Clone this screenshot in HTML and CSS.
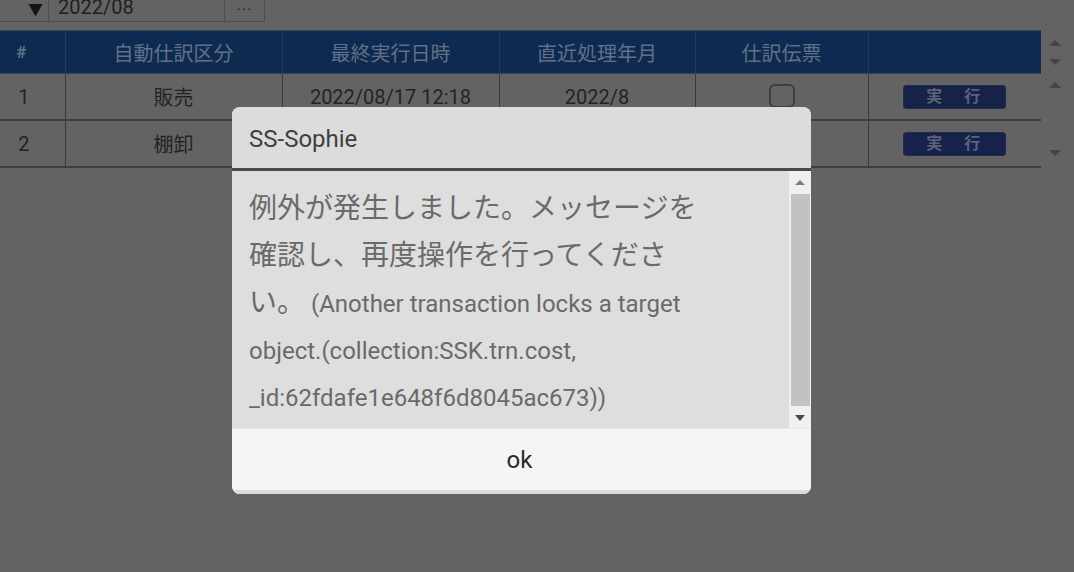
FILE: index.html
```html
<!DOCTYPE html>
<html lang="ja">
<head>
<meta charset="utf-8">
<link rel="stylesheet" href="styles.css">
</head>
<body>
<div class="page">
  <div class="toolbar">
    <div class="select"><span class="caret">▼</span></div>
    <div class="input">2022/08</div>
    <div class="dots">...</div>
  </div>
  <div class="grid-wrap">
    <table class="grid">
      <colgroup>
        <col class="c1"><col class="c2"><col class="c3"><col class="c4"><col class="c5"><col class="c6">
      </colgroup>
      <thead>
        <tr>
          <th>#</th>
          <th>自動仕訳区分</th>
          <th>最終実行日時</th>
          <th>直近処理年月</th>
          <th>仕訳伝票</th>
          <th></th>
        </tr>
      </thead>
      <tbody>
        <tr>
          <td>1</td>
          <td>販売</td>
          <td>2022/08/17 12:18</td>
          <td>2022/8</td>
          <td><span class="check"></span></td>
          <td><span class="run">実　行</span></td>
        </tr>
        <tr>
          <td>2</td>
          <td>棚卸</td>
          <td></td>
          <td></td>
          <td></td>
          <td><span class="run">実　行</span></td>
        </tr>
      </tbody>
    </table>
    <div class="vscroll">
      <div class="arrows-head"><span class="tri up"></span><span class="tri down"></span></div>
      <div class="arrows-body"><span class="tri up"></span><span class="tri down"></span></div>
    </div>
  </div>
</div>

<div class="dialog">
  <div class="dlg-title">SS-Sophie</div>
  <div class="dlg-body">
    <div class="msg"><span class="jp">例外が発生しました。メッセージを</span><br><span class="jp">確認し、再度操作を行ってくださ</span><br><span class="jp">い。</span> (Another transaction locks a target<br>object.(collection:SSK.trn.cost,<br>_id:62fdafe1e648f6d8045ac673))</div>
    <div class="sbar">
      <span class="sb-arrow sb-up"></span>
      <span class="sb-thumb"></span>
      <span class="sb-arrow sb-down"></span>
    </div>
  </div>
  <div class="dlg-foot">ok</div>
</div>
</body>
</html>
```
FILE: styles.css
```css
html, body {
  margin: 0;
  padding: 0;
  width: 1074px;
  height: 572px;
  overflow: hidden;
  background: #646363;
  font-family: Roboto, "Noto Sans CJK JP", sans-serif;
}

.page {
  width: 1074px;
  height: 572px;
}

.toolbar {
  display: flex;
  height: 30px;
  margin-top: -9px;
  border-bottom: 1px solid #4e4e4e;
  width: 265px;
}
.select {
  width: 48px;
  display: flex;
  justify-content: flex-end;
  align-items: center;
  padding-top: 4px;
  box-sizing: border-box;
}
.caret {
  color: #141414;
  font-size: 15px;
  margin-right: 5px;
}
.input {
  width: 177px;
  border-left: 1px solid #4e4e4e;
  border-right: 1px solid #4e4e4e;
  color: #202020;
  font-size: 20px;
  padding: 5px 0 0 9px;
  box-sizing: border-box;
  line-height: 22px;
}
.dots {
  width: 40px;
  border-right: 1px solid #4e4e4e;
  color: #202020;
  font-size: 15px;
  text-align: center;
  padding-top: 5px;
  box-sizing: border-box;
  letter-spacing: 1px;
}

.grid-wrap {
  display: flex;
  margin-top: 8px;
}
.grid {
  width: 1041px;
  border-collapse: collapse;
  table-layout: fixed;
  flex: none;
}
col.c1 { width: 65px; }
col.c2 { width: 217px; }
col.c3 { width: 217px; }
col.c4 { width: 196px; }
col.c5 { width: 173px; }
col.c6 { width: 173px; }
.grid th {
  background: #0f2a50;
  color: #617088;
  font-weight: normal;
  font-size: 20px;
  height: 42px;
  padding: 0;
  border-left: 1px solid #2b3a52;
  border-top: 1px solid #3b4250;
  border-bottom: 1px solid #3b4250;
}
.grid th:first-child {
  border-left: none;
  font-weight: bold;
  font-size: 17px;
  padding-right: 22px;
}
.grid td {
  height: 45px;
  padding: 0;
  text-align: center;
  color: #232323;
  font-size: 20px;
  border-left: 1px solid #3a3a3a;
  border-bottom: 2px solid #3e3e3e;
}
.grid td:first-child {
  border-left: none;
  padding-right: 17px;
}

.check {
  display: inline-block;
  width: 22px;
  height: 20px;
  border: 2px solid #3e3e3e;
  border-radius: 6px;
  vertical-align: middle;
  margin-top: -4px;
}
.run {
  display: inline-block;
  width: 101px;
  height: 22px;
  line-height: 22px;
  background: #17224a;
  border: 1px solid #232c4c;
  border-radius: 3px;
  color: #5c6377;
  font-size: 16px;
  font-weight: bold;
  letter-spacing: 3px;
  vertical-align: middle;
}

.vscroll {
  width: 28px;
  display: flex;
  flex-direction: column;
  align-items: center;
}
.arrows-head {
  height: 43px;
  display: flex;
  flex-direction: column;
  align-items: center;
  gap: 13px;
  padding-top: 10px;
  box-sizing: border-box;
}
.arrows-body {
  height: 93px;
  display: flex;
  flex-direction: column;
  align-items: center;
  justify-content: space-between;
  padding: 9px 0 10px;
  box-sizing: border-box;
}
.tri {
  width: 0;
  height: 0;
  border-left: 6px solid transparent;
  border-right: 6px solid transparent;
}
.tri.up { border-bottom: 6px solid #454545; }
.tri.down { border-top: 6px solid #454545; }

.dialog {
  position: absolute;
  left: 232px;
  top: 107px;
  width: 579px;
  height: 387px;
  border-radius: 8px;
  overflow: hidden;
  display: flex;
  flex-direction: column;
  background: #dcdcdc;
}
.dlg-title {
  background: #dcdcdc;
  color: #3f3f3f;
  font-size: 24px;
  padding-left: 17px;
  padding-top: 2px;
  height: 59px;
  display: flex;
  align-items: center;
  border-bottom: 3px solid #4a4a4a;
}
.dlg-body {
  display: flex;
  height: 257px;
  background: #dedede;
}
.msg {
  flex: 1;
  padding: 16px 0 0 17px;
  color: #6a6a6a;
  font-size: 24px;
  line-height: 47px;
  white-space: nowrap;
  overflow: hidden;
}
.msg .jp {
  font-size: 28px;
  line-height: 0;
  font-family: "Noto Sans CJK JP", sans-serif;
}
.sbar {
  width: 22px;
  background: #f0f0f0;
  display: flex;
  flex-direction: column;
  align-items: center;
  padding: 9px 0 7px;
  box-sizing: border-box;
}
.sb-arrow {
  width: 0;
  height: 0;
  border-left: 5px solid transparent;
  border-right: 5px solid transparent;
}
.sb-up { border-bottom: 5px solid #7b7b7b; }
.sb-down { border-top: 6px solid #4a4a4a; }
.sb-thumb {
  width: 19px;
  flex: 1;
  background: #c2c2c2;
  margin: 9px 0 9px;
}
.dlg-foot {
  flex: 1;
  background: #f5f5f5;
  border-top: 1px solid #e6e6e6;
  border-bottom: 4px solid #dcdcdc;
  display: flex;
  align-items: center;
  justify-content: center;
  padding-right: 4px;
  color: #2a2a2a;
  font-size: 24px;
}
```
